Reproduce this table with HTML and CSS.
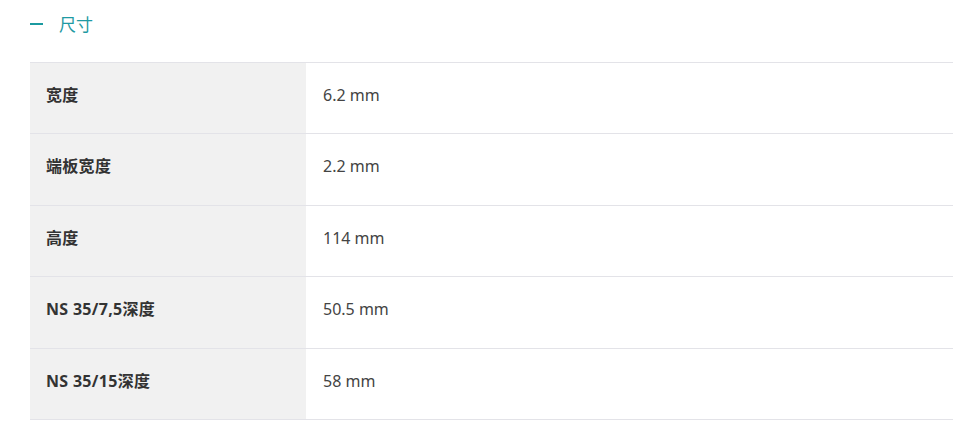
FILE: index.html
```html
<!DOCTYPE html>
<html lang="zh">
<head>
<meta charset="utf-8">
<link rel="stylesheet" href="styles.css">
</head>
<body>
<div class="section">
  <div class="head">
    <span class="dash"></span>
    <span class="title">尺寸</span>
  </div>
  <div class="table">
    <div class="row"><div class="label">宽度</div><div class="value">6.2 mm</div></div>
    <div class="row"><div class="label">端板宽度</div><div class="value">2.2 mm</div></div>
    <div class="row"><div class="label">高度</div><div class="value">114 mm</div></div>
    <div class="row"><div class="label">NS 35/7,5深度</div><div class="value">50.5 mm</div></div>
    <div class="row"><div class="label">NS 35/15深度</div><div class="value">58 mm</div></div>
  </div>
</div>
</body>
</html>
```
FILE: styles.css
```css
html, body {
  margin: 0;
  padding: 0;
  background: #fff;
}
body {
  font-family: "Noto Sans", "Noto Sans CJK SC", sans-serif;
  color: #333;
}
.section {
  padding: 0 8px 0 30px;
}
.head {
  height: 62px;
  display: flex;
  align-items: flex-start;
  padding-top: 13px;
  box-sizing: border-box;
}
.dash {
  width: 13px;
  height: 2px;
  background: #1b9aa0;
  margin-top: 10px;
  margin-right: 16px;
}
.title {
  font-family: "Noto Sans CJK SC", sans-serif;
  font-size: 17px;
  line-height: 22px;
  color: #1f9aa3;
}
.table {
  border-top: 1px solid #e3e3e8;
}
.row {
  display: flex;
  height: 71.4px;
  box-sizing: border-box;
  border-bottom: 1px solid #e3e3e8;
}
.label {
  width: 260px;
  flex: none;
  background: #f1f1f1;
  padding: 21px 0 0 16px;
  font-family: "Noto Sans", "Noto Sans CJK SC", sans-serif;
  font-weight: 700;
  font-size: 16px;
  line-height: 22px;
  letter-spacing: 0.3px;
  color: #333;
}
.value {
  flex: 1;
  padding: 21px 0 0 17px;
  font-family: "Noto Sans", "Noto Sans CJK SC", sans-serif;
  font-size: 16px;
  line-height: 22px;
  color: #444;
}
```
